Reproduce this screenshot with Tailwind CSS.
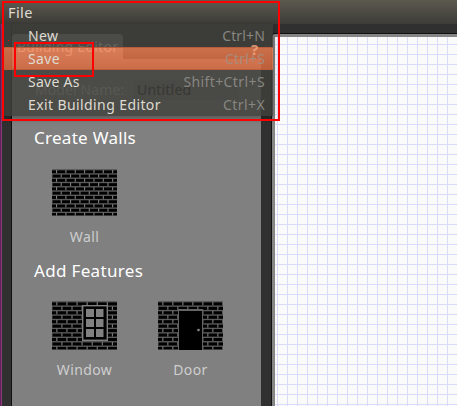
<!DOCTYPE html>
<html lang="en"><head><meta charset="utf-8"><title>Building Editor</title>
<script src="https://cdn.jsdelivr.net/npm/@tailwindcss/browser@4"></script></head>
<body class="relative flex h-[406px] w-[457px] flex-col overflow-hidden bg-[#303030] font-['Noto_Sans',sans-serif] text-[14px] tracking-[0.4px]">
<header class="flex h-6 shrink-0 items-center bg-linear-to-b from-[#5c594f] to-[#3d3c38] pl-2 text-[#dfdbd2]"><span class="text-[14.5px] leading-6">File</span></header>
<main class="flex min-h-0 flex-1">
  <div class="w-px bg-[#64205a]"></div><div class="w-px bg-[#873b78]"></div>
  <div class="w-[9px] bg-[#303030]"></div>
  <div class="w-px bg-[#111]"></div>
  <aside class="flex w-[249px] flex-col pt-[10px]">
    <div class="flex h-[25px]"><div class="w-[111px] rounded-t bg-[#808080] pl-[5px] leading-[25px] text-white tracking-[0.25px]">Building Editor</div></div>
    <div class="flex h-[54px] items-center bg-[#808080] pl-[23px] pt-[7px] text-[#c4c4c4]"><span class="w-[99px] whitespace-nowrap tracking-[0.1px]">Model Name:</span><span class="h-5 w-[105px] rounded-sm bg-[#747474] pl-[3px] leading-5 tracking-[0.2px] text-[#111]">Untitled</span></div>
    <section class="flex flex-1 flex-col bg-[#808080] pl-[22px]">
      <h2 class="mt-[13px] h-6 text-[17px] leading-6 tracking-[0.28px] text-white">Create Walls</h2>
      <figure class="ml-[18px] mt-[19px] flex w-[65px] flex-col items-center">
        <svg id="wall" width="65" height="47"></svg>
        <figcaption class="mt-[11px] h-5 leading-5 text-[#cecece]">Wall</figcaption>
      </figure>
      <h2 class="mt-[12px] h-6 text-[17px] leading-6 tracking-[0.33px] text-white">Add Features</h2>
      <div class="ml-[18px] mt-[18px] flex gap-[41px] text-[#cecece]">
        <figure class="flex w-[65px] flex-col items-center"><svg id="window" width="65" height="49"></svg><figcaption class="mt-[10px] h-5 leading-5">Window</figcaption></figure>
        <figure class="flex w-[65px] flex-col items-center"><svg id="door" width="65" height="49"></svg><figcaption class="mt-[10px] h-5 leading-5">Door</figcaption></figure>
      </div>
    </section>
  </aside>
  <div class="w-[10px] bg-[#303030]"></div>
  <div class="flex flex-1 flex-col pt-[9px]">
    <div class="flex-1 rounded-tl border-t border-l border-[#111] bg-[#858585] pl-[3px] pt-[3px]">
      <svg width="182" height="369" class="bg-[#fafafa]"><defs><pattern id="grid" x="2" y="7" width="10" height="10" patternUnits="userSpaceOnUse"><path d="M.5 0V10M0 .5H10" stroke="#dadafa"/></pattern></defs><rect width="182" height="369" fill="url(#grid)"/></svg>
    </div>
  </div>
</main>
<nav class="absolute left-[2px] top-6 flex h-[92px] w-[271px] flex-col text-[#dfdbd2] shadow-[0_3px_6px_rgba(0,0,0,.3)]">
  <div class="flex h-[23px] items-center justify-between bg-[#403f3b]/82 pl-[26px] pr-[8px]"><span>New</span><span class="tracking-[0.15px] text-[#888681]">Ctrl+N</span></div>
  <div class="flex h-[23px] items-center justify-between border-y border-[#b95d38] bg-linear-to-b from-[#eb7d4f]/82 to-[#dd693d]/82 pl-[26px] pr-[8px]"><span>Save</span><span class="tracking-[0.15px] text-[#aa8a7b]">Ctrl+S</span></div>
  <div class="flex h-[23px] items-center justify-between bg-[#403f3b]/82 pl-[26px] pr-[8px]"><span class="tracking-[0.25px]">Save As</span><span class="text-[#888681]">Shift+Ctrl+S</span></div>
  <div class="flex h-[23px] items-center justify-between bg-[#403f3b]/82 pl-[26px] pr-[8px]"><span>Exit Building Editor</span><span class="text-[#888681]">Ctrl+X</span></div>
</nav>
<b class="absolute left-[251px] top-[39px] text-[15px] leading-5 text-[#f6aa86]/80">?</b>
<div class="absolute left-[2px] top-px h-[120px] w-[278px] border-2 border-[#f00]"></div>
<div class="absolute left-[14px] top-[42px] h-[35px] w-[80px] border-2 border-[#f00]"></div>
<div class="absolute left-2 top-10 size-px bg-[#f00]"></div>
<script>
function bricks(h, pitch, start) {
  const row = h / 11;
  let s = `<rect width="65" height="${h}" fill="#000"/>`;
  for (let r = 0; r < 11; r++) {
    s += `<rect y="${r * row}" width="65" height="1.35" fill="#5c5c5c"/>`;
    for (let x = start + (r % 2 ? pitch / 2 : 0) - pitch; x < 65; x += pitch)
      s += `<rect x="${x - .5}" y="${r * row + 1}" width="1.1" height="${row - 1}" fill="#808080"/>`;
  }
  return s + `<rect y="${h - .7}" width="65" height=".7" fill="#555"/>`;
}
wall.innerHTML = bricks(47, 9.35, 4.5);
document.getElementById('window').innerHTML = bricks(49, 10.1, 4.8) +
  '<rect x="30.7" y="4.7" width="24.6" height="34.6" fill="#000" stroke="#808080" stroke-width="1.4"/><path d="M34 8h8v8h-8zM44 8h7.5v8h-7.5zM34 18h8v8h-8zM44 18h7.5v8h-7.5zM34 28h8v8h-8zM44 28h7.5v8h-7.5z" fill="#808080"/>';
door.innerHTML = bricks(49, 10, 4.8) +
  '<path d="M20.5 49V9.5H44.5V49" fill="#000" stroke="#656565"/><path d="M20 9H45" stroke="#656565" stroke-width="2"/><circle cx="40.5" cy="29" r="1.3" fill="#888"/>';
</script></body></html>
